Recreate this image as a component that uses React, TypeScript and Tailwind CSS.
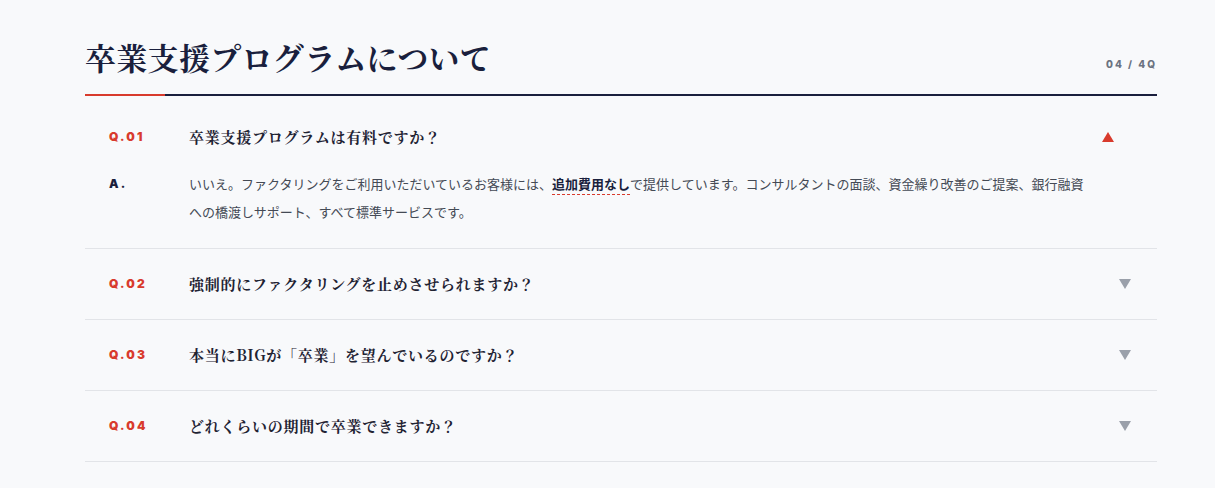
// @ts-nocheck
import React, { useState } from "react";

const serif = {
  fontFamily: '"Noto Serif CJK JP", "Noto Serif JP", "Liberation Serif", "Noto Sans CJK JP", serif',
};

const faqs = [
  {
    no: "01",
    q: "卒業支援プログラムは有料ですか？",
  },
  { no: "02", q: "強制的にファクタリングを止めさせられますか？" },
  { no: "03", q: "本当にBIGが「卒業」を望んでいるのですか？" },
  { no: "04", q: "どれくらいの期間で卒業できますか？" },
];

function Triangle({ up }) {
  return (
    <svg width="12" height="10" viewBox="0 0 12 10">
      {up ? (
        <polygon points="6,0 12,10 0,10" fill="#d83b2d" />
      ) : (
        <polygon points="0,0 12,0 6,10" fill="#9aa0aa" />
      )}
    </svg>
  );
}

export default function App() {
  const [open, setOpen] = useState(0);

  return (
    <div className="min-h-[488px] w-full bg-[#f8f9fb] font-['Inter','Noto_Sans_CJK_JP',sans-serif]">
      <div className="ml-[85px] w-[1072px] pt-[34px]">
        {/* header */}
        <div className="flex items-end justify-between">
          <h2
            style={serif}
            className="text-[31px] font-bold leading-[46px] tracking-[0.01em] text-[#1a1f3d]"
          >
            卒業支援プログラムについて
          </h2>
          <span className="mb-[8px] text-[10px] font-extrabold tracking-[0.2em] text-[#6b7280]">
            04 / 4Q
          </span>
        </div>
        <div className="mt-[14px] flex h-[2px]">
          <div className="w-[80px] bg-[#d83b2d]" />
          <div className="flex-1 bg-[#1a1f3d]" />
        </div>

        {/* list */}
        <div>
          {faqs.map((f, i) => (
            <div key={f.no} className="border-b border-[#e2e4e8]">
              <button
                onClick={() => setOpen(open === i ? -1 : i)}
                className={`flex w-full items-center text-left ${
                  i === 0 ? "pt-[29px] pb-[6px]" : "py-[23px]"
                }`}
              >
                <span className="w-[104px] pl-[24px] text-[12px] font-black tracking-[0.18em] text-[#d83b2d]">
                  Q.{f.no}
                </span>
                <span
                  style={serif}
                  className="flex-1 text-[15px] font-bold leading-[24px] tracking-[0.05em] text-[#1f2333]"
                >
                  {f.q}
                </span>
                <span
                  className={`flex items-center ${
                    open === i ? "mr-[43px]" : "mr-[26px]"
                  }`}
                >
                  <Triangle up={open === i} />
                </span>
              </button>
              {open === i && (
                <div className="flex pt-[15px] pb-[22px]">
                  <span className="w-[104px] pl-[24px] text-[12px] font-black leading-[28px] tracking-[0.18em] text-[#1a1f3d]">
                    A.
                  </span>
                  <p className="w-[900px] text-[13px] leading-[28px] text-[#444a55]">
                    いいえ。ファクタリングをご利用いただいているお客様には、
                    <strong className="font-bold text-[#1a1f3d] underline decoration-[#d83b2d] decoration-dashed decoration-1 underline-offset-[5px]">
                      追加費用なし
                    </strong>
                    で提供しています。コンサルタントの面談、資金繰り改善のご提案、銀行融資への橋渡しサポート、すべて標準サービスです。
                  </p>
                </div>
              )}
            </div>
          ))}
        </div>
      </div>
    </div>
  );
}
